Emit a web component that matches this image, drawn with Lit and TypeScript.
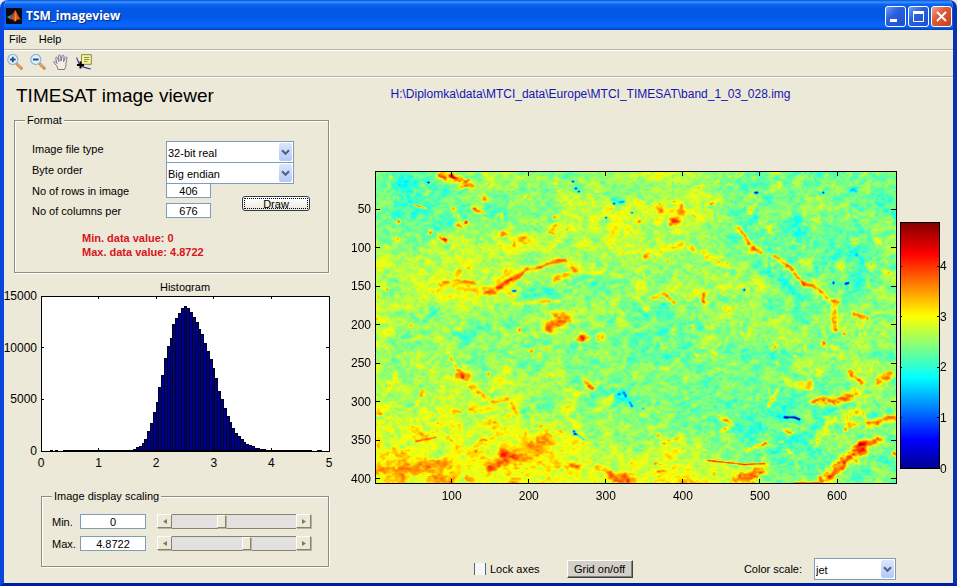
import { LitElement, html, svg, css } from "lit";
import { customElement, property, query } from "lit/decorators.js";

interface Tick {
  at: number;
  label: string;
}

/** A ridge (positive amp) or basin (negative amp) in the raster: amp, width, then x,y pairs. */
type Feature = [number, number, ...number[]];

const MAX_VALUE = 4.8722;
const RASTER_W = 520;
const RASTER_H = 312;

/* Regional mean values, one row for every 39 raster lines. */
const MEANS = [
  [2.3, 2.1, 2.5, 2.6, 2.35, 2.5, 2.65, 2.6, 2.5, 2.4, 2.3, 2.3, 2.35, 2.25],
  [2.3, 2.2, 2.25, 2.35, 2.4, 2.75, 2.75, 2.75, 2.75, 2.4, 2.25, 2.35, 2.4, 2.3],
  [2.65, 2.6, 2.6, 2.8, 2.7, 2.65, 2.8, 2.6, 2.5, 2.4, 2.25, 2.2, 2.3, 2.5],
  [2.6, 2.75, 2.9, 2.9, 2.6, 2.3, 2.5, 2.5, 2.65, 2.6, 2.4, 2.35, 2.3, 2.4],
  [2.7, 2.65, 2.35, 2.4, 2.5, 2.6, 2.4, 2.3, 2.4, 2.5, 2.55, 2.4, 2.5, 2.4],
  [2.6, 2.55, 2.6, 2.5, 2.45, 2.35, 2.35, 2.4, 2.4, 2.35, 2.3, 2.4, 2.55, 2.45],
  [2.75, 2.6, 2.9, 2.8, 2.55, 2.5, 2.3, 2.35, 2.4, 2.35, 2.25, 2.25, 2.4, 2.4],
  [2.95, 2.85, 2.8, 3.0, 3.0, 2.75, 2.65, 2.6, 2.5, 2.3, 2.2, 2.3, 2.4, 2.35],
  [3.1, 3.1, 2.95, 2.95, 3.0, 2.9, 2.95, 2.95, 3.0, 2.8, 2.35, 2.5, 2.4, 2.3],
];

const FEATURES: Feature[] = [
  [2.1, 4, 66, 4, 76, 5], [1.5, 3, 76, 5, 84, 9, 92, 9], [1.3, 2, 85, 15, 97, 14], [1.4, 4, 109, 28],
  [1.5, 1, 38, 33, 51, 37], [1.8, 2, 98, 37, 106, 41], [1.9, 2, 91, 50], [1.5, 3, 83, 53],
  [2.4, 2, 66, 67, 69, 68], [2, 2, 55, 60], [1.6, 2, 23, 50], [1.6, 2, 23, 67], [1.3, 3, 129, 62],
  [1, 4, 148, 68], [1, 5, 177, 57], [0.8, 4, 160, 51], [1, 2, 178, 45], [1.3, 2, 78, 37],
  [1.3, 2, 123, 115, 138, 107, 152, 98, 165, 96, 178, 90, 190, 88],
  [0.8, 2, 65, 112, 78, 109, 102, 111], [0.5, 3, 78, 116, 125, 116, 138, 110], [1.2, 3, 179, 108, 186, 104, 192, 103],
  [1.3, 3, 199, 97], [1.1, 3, 110, 121, 118, 120], [1, 3, 83, 100], [0.7, 4, 93, 97],
  [0.8, 2, 153, 130, 183, 129], [1.3, 4, 172, 156, 193, 148], [1.1, 4, 180, 143, 188, 144],
  [1.4, 2, 143, 157], [1, 2, 35, 153], [1, 3, 200, 168, 210, 165], [1.1, 2, 196, 138],
  [-0.35, 12, 32, 13], [-0.25, 10, 50, 48], [-0.6, 8, 57, 139], [-0.4, 12, 148, 117, 175, 117],
  [-1, 3, 237, 28, 248, 30], [-0.25, 14, 125, 35], [-0.25, 14, 225, 120],
  [-3, 1, 53, 11], [-3, 1, 200, 17], [-3, 1, 203, 20], [-3, 1, 238, 32], [-3, 1, 230, 46],
  [-3, 1, 256, 41], [-2.4, 1, 137, 119, 140, 119], [-3, 1, 197, 10],
  [-3, 1, 379, 21, 381, 21], [-3.5, 1, 457, 111], [-2.3, 1, 469, 112, 472, 111], [-3.5, 1, 368, 118],
  [-2.5, 1, 447, 21],
  [1.6, 3, 296, 51, 300, 49], [1, 5, 286, 39], [1.2, 3, 263, 50], [1, 3, 375, 39], [0.7, 5, 305, 39],
  [1.1, 2, 363, 57, 375, 74, 385, 80], [1.3, 2, 398, 84, 415, 97, 427, 113],
  [1.2, 2, 427, 113, 442, 116, 452, 127, 462, 130], [1.1, 3, 458, 132, 459, 157],
  [0.8, 5, 378, 77], [0.6, 7, 430, 91], [0.8, 4, 465, 94], [0.8, 5, 495, 93], [0.8, 5, 512, 102],
  [0.8, 4, 502, 69], [1.3, 2, 468, 162], [1.2, 2, 478, 142, 490, 147],
  [1.2, 2, 277, 126, 288, 122, 298, 131], [1.4, 2, 327, 123, 327, 131], [1, 3, 350, 136],
  [1.1, 3, 270, 138], [1, 3, 270, 84], [0.5, 4, 285, 79, 305, 72, 322, 79, 352, 95],
  [-0.5, 6, 378, 92, 405, 109, 420, 122, 420, 137], [-1.2, 2, 475, 18, 481, 18],
  [-0.3, 10, 478, 82], [-0.3, 6, 355, 16], [-0.3, 9, 420, 54], [-0.35, 12, 290, 137],
  [1.4, 4, 84, 203, 89, 205], [0.9, 2, 75, 186, 87, 204], [0.7, 3, 95, 214, 118, 229, 132, 227, 142, 241],
  [0.8, 4, 97, 239], [0.5, 5, 118, 251], [0.8, 12, 158, 274, 167, 268], [1.4, 5, 128, 282, 140, 284],
  [1.1, 4, 113, 296, 130, 290], [1, 1, 40, 269, 60, 265], [0.5, 6, 2, 297, 68, 292],
  [1, 3, 3, 242], [0.6, 6, 62, 307, 76, 304], [0.7, 4, 28, 304], [1.1, 3, 195, 293, 202, 294],
  [1.2, 5, 238, 306, 252, 307], [0.9, 3, 222, 296, 235, 301], [1, 2, 185, 258],
  [1.5, 2, 207, 208, 217, 216], [0.8, 4, 229, 227, 235, 227], [1.3, 2, 155, 178], [1.3, 2, 113, 202],
  [1, 3, 207, 166], [1, 3, 225, 165], [-0.7, 4, 148, 239], [-0.4, 5, 245, 222, 257, 232],
  [-1.9, 2, 199, 261], [-1.2, 1, 199, 261, 208, 267], [-3, 1, 198, 259],
  [-1.2, 1, 248, 220, 250, 224], [-1.2, 1, 254, 230, 256, 234], [-1.2, 1, 267, 236], [-1.2, 1, 243, 222],
  [-2.6, 1, 408, 245, 418, 245, 423, 247],
  [1.4, 2, 473, 200, 485, 211], [1.2, 4, 504, 207, 513, 203], [1.5, 4, 459, 229, 480, 221],
  [1.4, 3, 438, 229, 455, 228], [1, 2, 402, 217, 392, 234], [0.7, 6, 432, 214],
  [0.6, 4, 410, 209, 432, 214], [0.7, 4, 442, 200], [0.8, 4, 460, 176], [1.1, 2, 448, 172],
  [1.2, 2, 343, 244, 357, 252, 348, 259], [1.2, 4, 472, 253, 479, 251], [1.8, 2, 468, 258],
  [1.5, 4, 492, 251, 518, 245], [1.3, 2, 372, 277, 390, 272], [1.3, 2, 408, 258, 414, 261],
  [1.5, 1, 332, 288, 368, 292, 388, 291], [1.4, 5, 363, 307, 376, 303, 385, 297],
  [1.8, 6, 453, 304, 472, 286, 483, 278], [1.8, 4, 481, 278, 490, 270, 502, 268], [1.1, 3, 445, 307],
  [1.3, 1, 418, 310, 442, 310], [1.8, 2, 518, 281], [0.6, 4, 440, 270, 450, 252, 480, 240],
  [-0.3, 14, 432, 269], [-0.25, 12, 478, 299], [-0.3, 8, 360, 256], [-0.25, 12, 410, 235],
];

function hash(x: number, y: number, seed: number): number {
  let h = Math.imul(x, 374761393) ^ Math.imul(y, 668265263) ^ Math.imul(seed, 974634541);
  h = Math.imul(h ^ (h >>> 13), 1274126177);
  h = Math.imul(h ^ (h >>> 15), 2246822519);
  return ((h ^ (h >>> 16)) >>> 0) / 2147483648 - 1;
}

function noise(x: number, y: number, sx: number, sy: number, seed: number): number {
  const gx = x / sx;
  const gy = y / sy;
  const ix = Math.floor(gx);
  const iy = Math.floor(gy);
  const fx = gx - ix;
  const fy = gy - iy;
  const ux = fx * fx * (3 - 2 * fx);
  const uy = fy * fy * (3 - 2 * fy);
  const top = hash(ix, iy, seed) * (1 - ux) + hash(ix + 1, iy, seed) * ux;
  const bottom = hash(ix, iy + 1, seed) * (1 - ux) + hash(ix + 1, iy + 1, seed) * ux;
  return top * (1 - uy) + bottom * uy;
}

function regionalMean(x: number, y: number): number {
  const gx = Math.min(x / 40, 12.99);
  const gy = Math.min(y / 39, 7.99);
  const ix = Math.floor(gx);
  const iy = Math.floor(gy);
  const fx = gx - ix;
  const fy = gy - iy;
  const top = MEANS[iy][ix] * (1 - fx) + MEANS[iy][ix + 1] * fx;
  const bottom = MEANS[iy + 1][ix] * (1 - fx) + MEANS[iy + 1][ix + 1] * fx;
  return top * (1 - fy) + bottom * fy;
}

function segmentDistance(x: number, y: number, ax: number, ay: number, bx: number, by: number): number {
  const dx = bx - ax;
  const dy = by - ay;
  const len = dx * dx + dy * dy;
  const t = len ? Math.max(0, Math.min(1, ((x - ax) * dx + (y - ay) * dy) / len)) : 0;
  return Math.hypot(x - ax - t * dx, y - ay - t * dy);
}

function jet(t: number): [number, number, number] {
  const band = (c: number) => 255 * Math.max(0, Math.min(1, 1.5 - Math.abs(4 * t - c)));
  return [band(3), band(2), band(1)];
}

function buildRaster(): Float32Array {
  const data = new Float32Array(RASTER_W * RASTER_H);
  for (let y = 0; y < RASTER_H; y++) {
    for (let x = 0; x < RASTER_W; x++) {
      const wx = x + noise(x, y, 9, 9, 11) * 5;
      const wy = y + noise(x, y, 9, 9, 12) * 4;
      const speck = Math.max(0, noise(wx, wy, 5, 4, 9) - 0.66) * (0.8 + noise(x, y, 40, 30, 10));
      data[y * RASTER_W + x] =
        0.05 +
        regionalMean(Math.max(0, wx), Math.max(0, wy)) +
        noise(wx, wy, 22, 14, 1) * 0.16 +
        noise(wx, wy, 10, 7, 2) * 0.19 +
        noise(wx, wy, 5, 4, 3) * 0.22 +
        noise(x, y, 3, 2, 4) * 0.22 +
        speck * 1.8;
    }
  }
  for (const [amp, width, ...pts] of FEATURES) {
    const line = pts.length === 2 ? [...pts, ...pts] : pts;
    const reach = Math.ceil(width * 2.4);
    const xs = line.filter((_, i) => i % 2 === 0);
    const ys = line.filter((_, i) => i % 2 === 1);
    const x1 = Math.min(RASTER_W - 1, Math.max(...xs) + reach);
    const y1 = Math.min(RASTER_H - 1, Math.max(...ys) + reach);
    for (let y = Math.max(0, Math.min(...ys) - reach); y <= y1; y++) {
      for (let x = Math.max(0, Math.min(...xs) - reach); x <= x1; x++) {
        const warp = width > 1 ? Math.min(3, width * 0.6) : 0;
        const wx = x + noise(x, y, 5, 4, 6) * warp;
        const wy = y + noise(x, y, 5, 4, 7) * warp;
        let d = Infinity;
        for (let i = 0; i + 3 < line.length; i += 2) {
          d = Math.min(d, segmentDistance(wx, wy, line[i], line[i + 1], line[i + 2], line[i + 3]));
        }
        const grain = width > 1 ? 0.85 + noise(x, y, 3, 2, 8) * 0.4 : 1;
        data[y * RASTER_W + x] += amp * grain * Math.exp(-((d / width) ** 2));
      }
    }
  }
  return data.map((v) => (v > 3.45 ? 3.45 + (v - 3.45) * 0.6 : v));
}

const num = (n: number): Tick => ({ at: n, label: String(n) });

/** Tick marks and tick labels laid over a plot that fills the same grid cell. */
@customElement("plot-axes")
export class PlotAxes extends LitElement {
  @property({ attribute: false }) xTicks: Tick[] = [];
  @property({ attribute: false }) yTicks: Tick[] = [];
  @property({ attribute: false }) xRange: [number, number] = [0, 1];
  @property({ attribute: false }) yRange: [number, number] = [0, 1];
  @property({ type: Number }) tick = 3;
  @property({ type: Boolean, attribute: "labels-right" }) labelsRight = false;

  static styles = css`
    :host { display: grid; min-width: 0; }
    svg { width: 100%; height: 100%; overflow: visible; display: block; }
    line { stroke: #000; stroke-width: 1; shape-rendering: crispEdges; }
    rect { fill: none; stroke: #000; shape-rendering: crispEdges; }
    text { font: 12px "Liberation Sans", Arial, sans-serif; fill: #000; }
    .x { text-anchor: middle; }
    .left { text-anchor: end; }
  `;

  private share(v: number, [from, to]: [number, number]) {
    return `${((v - from) / (to - from)) * 100}%`;
  }

  render() {
    return html`<svg>
      <rect width="100%" height="100%"></rect>
      ${this.xTicks.map(({ at, label }) => {
        const x = this.share(at, this.xRange);
        return svg`
          <svg x=${x} y="100%"><line y2=${-this.tick}></line></svg>
          <line x1=${x} x2=${x} y1="0" y2=${this.tick}></line>
          <text class="x" x=${x} y="100%" dy="16">${label}</text>`;
      })}
      ${this.yTicks.map(({ at, label }) => {
        const y = this.share(at, this.yRange);
        return svg`
          <line x1="0" x2=${this.tick} y1=${y} y2=${y}></line>
          <svg x="100%" y=${y}><line x2=${-this.tick}></line></svg>
          <text class=${this.labelsRight ? "right" : "left"} x=${this.labelsRight ? "100%" : "0"}
            y=${y} dx=${this.labelsRight ? 1 : -4} dy="4">${label}</text>`;
      })}
    </svg>`;
  }
}

@customElement("raster-plot")
export class RasterPlot extends LitElement {
  @query("canvas") private canvas!: HTMLCanvasElement;

  static styles = css`
    :host { display: block; }
    canvas { display: block; width: 100%; height: auto; }
  `;

  firstUpdated() {
    const ctx = this.canvas.getContext("2d")!;
    const image = ctx.createImageData(RASTER_W, RASTER_H);
    buildRaster().forEach((v, i) => {
      const [r, g, b] = jet(Math.max(0, v) / MAX_VALUE);
      image.data.set([r, g, b, 255], i * 4);
    });
    ctx.putImageData(image, 0, 0);
  }

  render() {
    return html`<canvas width=${RASTER_W} height=${RASTER_H} role="img" aria-label="Image data"></canvas>`;
  }
}

const FIRST_BIN = 33;
const COUNTS = [
  190, 320, 450, 745, 1130, 1850, 2690, 3760, 4730, 6190, 7350, 8910, 10100, 10850, 12200, 12860,
  13280, 13770, 13960, 13770, 13450, 12960, 12400, 11790, 11240, 10370, 9650, 8900, 8030, 6970,
  5800, 5020, 4150, 3370, 2720, 2200, 1720, 1430, 1130, 870, 650, 550, 420, 290, 230, 170, 170, 90,
];

@customElement("histogram-plot")
export class HistogramPlot extends LitElement {
  static styles = css`
    :host { display: block; min-height: 0; background: #fff; }
    svg { display: block; width: 100%; height: 100%; }
    rect { fill: #00008f; }
    path { stroke: #000020; fill: none; vector-effect: non-scaling-stroke; shape-rendering: crispEdges; }
    .floor { stroke: #000; stroke-width: 2; }
  `;

  render() {
    const bin = MAX_VALUE / 100;
    return html`<svg viewBox="0 0 5 15000" preserveAspectRatio="none" role="img" aria-label="Histogram of data values">
      ${COUNTS.map((count, i) => {
        const x = (FIRST_BIN + i) * bin;
        return svg`
          <rect x=${x} y=${15000 - count} width=${bin} height=${count}></rect>
          <path d="M${x} 15000V${15000 - count}H${x + bin}V15000"></path>`;
      })}
      <path class="floor" d="M.15 15000H.2M.25 15000H.3M.38 15000H4.7M4.8 15000H4.87"></path>
    </svg>`;
  }
}

@customElement("scale-slider")
export class ScaleSlider extends LitElement {
  @property() name = "";
  @property({ type: Number }) value = 0;

  static styles = css`
    :host { display: flex; height: 15px; min-width: 0; }
    button, input::-webkit-slider-thumb {
      box-sizing: border-box;
      background: #ece9d8;
      border: 1px solid;
      border-color: #fff #85836f #85836f #fff;
      box-shadow: 1px 1px 0 #b5b2a0;
    }
    button { width: 15px; height: 14px; padding: 0; display: grid; place-items: center; flex: none; }
    button svg { width: 4px; height: 5px; fill: #7c7a6c; }
    input {
      appearance: none;
      flex: 1;
      min-width: 0;
      margin: 0;
      height: 15px;
      background: #e3e1e0;
      border: solid #85836f;
      border-width: 1px 0;
      box-sizing: border-box;
    }
    input::-webkit-slider-thumb { appearance: none; width: 9px; height: 13px; }
  `;

  render() {
    return html`
      <button aria-label="Decrease ${this.name}"><svg viewBox="0 0 4 5"><path d="M4 0v5L0 2.5z" /></svg></button>
      <input type="range" aria-label="${this.name} slider" min="0" max="100" .value=${String(this.value)} />
      <button aria-label="Increase ${this.name}"><svg viewBox="0 0 4 5"><path d="M0 0v5l4-2.5z" /></svg></button>
    `;
  }
}

const chevron = html`<span class="drop"><svg viewBox="0 0 9 7"><path d="M1 1.2l3.5 3.6L8 1.2" /></svg></span>`;

@customElement("app-root")
export class AppRoot extends LitElement {
  static styles = css`
    :host {
      display: block;
      font: 11px/14px "Liberation Sans", Arial, sans-serif;
      color: #000;
      background: #dfe6f5;
    }
    * { box-sizing: border-box; }
    button, input, select { font: inherit; color: inherit; margin: 0; }
    .window {
      min-height: 100vh;
      display: flex;
      flex-direction: column;
      background: #ece9d8;
      border: solid;
      border-width: 0 4px 3px;
      border-radius: 8px 8px 0 0;
      border-color: #0a3fd8 #0831b4 #001f9c #0a45dc;
      overflow: hidden;
    }
    .titlebar {
      display: flex;
      align-items: center;
      gap: 4px;
      height: 30px;
      flex: none;
      margin: 0 -4px;
      padding: 2px 5px 0 6px;
      background: linear-gradient(#0a50d8 0, #3c95ff 7%, #0b66f0 14%, #0456e4 30%, #0358ea 60%, #0866fb 82%, #0663f6 90%, #0340c0 100%);
      color: #fff;
    }
    .titlebar h1 {
      flex: 1;
      margin: 0;
      font: bold 12px/18px "Open Sans", "Noto Sans", sans-serif;
      text-shadow: 1px 1px 1px #0a2a80;
    }
    .logo { width: 16px; height: 16px; }
    .caption { display: flex; gap: 2px; }
    .caption button {
      width: 21px;
      height: 21px;
      padding: 0;
      border: 1px solid #fff;
      border-radius: 3px;
      background: linear-gradient(135deg, #6f9cf5, #2a5fe0 40%, #1c4fd0);
    }
    .caption button.close { background: linear-gradient(135deg, #f0a28c, #e05a38 40%, #c8401c); }
    .caption svg { display: block; width: 19px; height: 19px; fill: none; stroke: #fff; }
    .menubar, .toolbar { display: flex; align-items: center; flex: none; }
    .menubar { height: 20px; padding: 0 5px 2px; gap: 12px; border-bottom: 1px solid #b4b2a4; }
    .menubar button { border: 0; padding: 0; background: none; }
    .toolbar {
      height: 27px;
      gap: 7px;
      padding: 0 3px 4px;
      border-top: 1px solid #fff;
      border-bottom: 1px solid #b4b2a4;
      box-shadow: 0 1px 0 #fff;
    }
    .toolbar button { width: 16px; height: 16px; padding: 0; border: 0; background: none; }
    .toolbar svg { display: block; width: 16px; height: 16px; }
    .content { flex: 1; display: grid; grid-template-columns: 325px minmax(0, 1fr); padding-top: 8px; }
    .side { display: flex; flex-direction: column; }
    .side h2 { margin: 0 0 6px 12px; font: 19px/22px "Liberation Sans", Arial, sans-serif; }
    fieldset {
      min-width: 0;
      margin: 0;
      border: 1px solid #8f8d80;
      box-shadow: 1px 1px 0 #fff, inset 1px 1px 0 #fff;
    }
    legend { background: #ece9d8; padding: 0 2px; }
    .format { margin: 0 0 8px 10px; padding: 14px 17px 13px; }
    .format legend { margin-left: -7px; }
    .rows { display: grid; grid-template-columns: 134px 45px 31px 52px 1fr; grid-template-rows: 21px 21px 20px 14px; }
    .rows .wide { grid-column: 2 / 5; }
    .rows label { grid-column: 1; padding-top: 1px; }
    .combo { display: grid; }
    .combo > * { grid-area: 1 / 1; }
    select {
      appearance: none;
      width: 100%;
      height: 22px;
      padding: 2px 20px 0 1px;
      border: 1px solid #7f9db9;
      border-radius: 0;
      background: #fff;
    }
    .drop {
      justify-self: end;
      display: grid;
      place-items: center;
      width: 13px;
      height: 18px;
      margin: 2px;
      background: linear-gradient(#dbe6fd, #b4c9f6);
      border-radius: 2px;
      pointer-events: none;
    }
    .drop svg { width: 9px; height: 7px; fill: none; stroke: #4d6185; stroke-width: 2; }
    input.value {
      width: 100%;
      height: 15px;
      padding: 0;
      border: 1px solid #7f9db9;
      background: #fff;
      text-align: center;
    }
    .draw {
      grid-column: 4 / 6;
      grid-row: 3 / 5;
      align-self: center;
      justify-self: start;
      width: 68px;
      height: 15px;
      padding: 0;
      margin-top: 6px;
      overflow: hidden;
      line-height: 15px;
      border: 1px solid #303c50;
      border-radius: 3px;
      background: linear-gradient(#fff, #ece9dc);
      outline: 1px dotted #000;
      outline-offset: -3px;
    }
    .range { margin: 14px 0 0 50px; color: #d8141c; font-weight: bold; }
    .range p { margin: 0; }
    .histogram { margin: 0 0 22px 37px; }
    .histogram h3 { margin: 0 0 4px; height: 11px; overflow: hidden; font-size: 11px; line-height: 12px; font-weight: normal; text-align: center; }
    .stack { display: grid; }
    .stack > * { grid-area: 1 / 1; }
    .histogram .stack { grid-template-rows: 155px; margin-bottom: 16px; }
    .scaling { margin: 0 0 16px 37px; padding: 11px 17px 15px 10px; }
    .scaling .line { display: grid; grid-template-columns: 28px 66px minmax(0, 1fr); align-items: center; height: 15px; }
    .scaling .line + .line { margin-top: 7px; }
    .scaling scale-slider { margin-left: 11px; }
    .view { display: flex; flex-direction: column; }
    .path { margin: 2px 0 70px; padding-right: 101px; text-align: center; font-size: 12px; color: #1414b4; white-space: nowrap; }
    .figure { display: grid; grid-template-columns: 46px minmax(0, 1fr) 4px 39px 14px; }
    .figure .image { grid-column: 2; }
    .colorbar { grid-column: 4; margin: 51px 0 15px; }
    .jet {
      background: linear-gradient(to top, #00008f, #00f 12%, #0ff 37%, #ff0 62%, #f00 87%, #800000);
    }
    .options {
      margin-top: auto;
      padding: 0 57px 3px 0;
      display: flex;
      align-items: center;
    }
    .lock { display: flex; align-items: center; gap: 4px; margin-left: 145px; }
    .lock input {
      appearance: none;
      width: 12px;
      height: 12px;
      background: #f7f7f5;
      border: solid #4d6a8c;
      border-width: 0 1px;
    }
    .grid {
      width: 66px;
      height: 18px;
      margin-left: 27px;
      padding: 0;
      background: #d4d0c8;
      border: 1px solid;
      border-color: #fff #404040 #404040 #fff;
      box-shadow: inset -1px -1px 0 #808080;
    }
    .scale { display: flex; align-items: center; gap: 12px; margin-left: auto; }
    .scale .combo { width: 82px; }
  `;

  render() {
    return html`
      <div class="window">
        <header class="titlebar">
          <svg class="logo" viewBox="0 0 16 16">
            <rect width="16" height="16" fill="#0b0b12" />
            <path d="M1 9l4-2 2 1.500-2 3z" fill="#3f8fb0" />
            <path d="M5 7l3-3 1-2L7 8.500 5 11.500 4 11z" fill="#7a4a48" />
            <path d="M9 2c1 0 2.500 5 6 10-2-1-3-1-4 0l-2.500 2C8 12 7 11 5 11.500 7 9 8 5 9 2z" fill="#d9541e" />
            <path d="M9.500 3c.5 2 1 5 .5 9l-1 1.500c.5-3 .5-7 .5-10.500z" fill="#f6b26a" />
          </svg>
          <h1>TSM_imageview</h1>
          <div class="caption">
            <button aria-label="Minimize"><svg viewBox="0 0 19 19"><path d="M4 13.500h7" stroke-width="3" /></svg></button>
            <button aria-label="Maximize"><svg viewBox="0 0 19 19"><path d="M4.500 5v9.500h10V5" /><path d="M4 5.500h11" stroke-width="3" /></svg></button>
            <button class="close" aria-label="Close"><svg viewBox="0 0 19 19"><path d="M5 5l9 9M14 5l-9 9" stroke-width="2" /></svg></button>
          </div>
        </header>
        <nav class="menubar"><button>File</button><button>Help</button></nav>
        <div class="toolbar">
          <button aria-label="Zoom in">
            <svg viewBox="0 0 16 16">
              <path d="M10 10l4.300 4.300" stroke="#c98a4b" stroke-width="3" stroke-linecap="round" />
              <path d="M10 9.500l4 4" stroke="#f3c894" />
              <circle cx="5.800" cy="5.500" r="5" fill="#e4f1fb" stroke="#8fb4d6" stroke-width="1.200" />
              <path d="M3 5.500h5.600M5.800 2.700v5.600" stroke="#1b4f8f" stroke-width="1.800" />
            </svg>
          </button>
          <button aria-label="Zoom out">
            <svg viewBox="0 0 16 16">
              <path d="M10 10l4.300 4.300" stroke="#c98a4b" stroke-width="3" stroke-linecap="round" />
              <path d="M10 9.500l4 4" stroke="#f3c894" />
              <circle cx="5.800" cy="5.500" r="5" fill="#e4f1fb" stroke="#8fb4d6" stroke-width="1.200" />
              <path d="M3 5.500h5.600" stroke="#1b4f8f" stroke-width="1.800" />
            </svg>
          </button>
          <button aria-label="Pan">
            <svg viewBox="0 0 16 16">
              <path d="M5 15.500L4 12 .7 8.600C.2 7.500 1.800 7 2.600 8L4 9.500 2.700 4.500C2.500 3 4 2.600 4.500 4L6 7.500 5.600 2C5.600.6 7.300.6 7.600 2l.5 5 1-5C9.400.8 11 1 11 2.300L10.600 7.500l1.700-3.800c.7-1.200 2-.6 1.700.6L13 9c0 2 0 4-1.500 6.500z" fill="#fbeadb" stroke="#6a6c9c" stroke-width=".9" />
            </svg>
          </button>
          <button aria-label="Data cursor">
            <svg viewBox="0 0 16 16">
              <path d="M.5 3.500C2 6 2 9 4 11s6 3 11 4" fill="none" stroke="#3c3ca0" stroke-width="1.200" />
              <path d="M5.500 .7h9.800v9.600H5.500z" fill="#f6f2a0" stroke="#8c8a3c" />
              <path d="M8 3.500h5M8 5.500h5M8 7.500h3.500" stroke="#8c8a50" />
              <path d="M4.500 7.500v7M1 11h7" stroke="#000" stroke-width="2" />
            </svg>
          </button>
        </div>
        <main class="content">
          <section class="side">
            <h2>TIMESAT image viewer</h2>
            <fieldset class="format">
              <legend>Format</legend>
              <div class="rows">
                <label for="type">Image file type</label>
                <span class="combo wide"><select id="type"><option>32-bit real</option></select>${chevron}</span>
                <label for="order">Byte order</label>
                <span class="combo wide"><select id="order"><option>Big endian</option></select>${chevron}</span>
                <label for="rows">No of rows in image</label>
                <input class="value" id="rows" value="406" />
                <label for="cols">No of columns per</label>
                <input class="value" id="cols" value="676" />
                <button class="draw">Draw</button>
              </div>
              <div class="range">
                <p>Min. data value: 0</p>
                <p>Max. data value: 4.8722</p>
              </div>
            </fieldset>
            <div class="histogram">
              <h3>Histogram</h3>
              <div class="stack">
                <histogram-plot></histogram-plot>
                <plot-axes
                  .xTicks=${[0, 1, 2, 3, 4, 5].map(num)} .xRange=${[0, 5]}
                  .yTicks=${[0, 5000, 10000, 15000].map(num)} .yRange=${[15000, 0]}
                ></plot-axes>
              </div>
            </div>
            <fieldset class="scaling">
              <legend>Image display scaling</legend>
              <div class="line">
                <label for="min">Min.</label><input class="value" id="min" value="0" />
                <scale-slider name="Min." .value=${39}></scale-slider>
              </div>
              <div class="line">
                <label for="max">Max.</label><input class="value" id="max" value="4.8722" />
                <scale-slider name="Max." .value=${61}></scale-slider>
              </div>
            </fieldset>
          </section>
          <section class="view">
            <p class="path">H:\\Diplomka\\data\\MTCI_data\\Europe\\MTCI_TIMESAT\\band_1_03_028.img</p>
            <div class="figure">
              <div class="stack image">
                <raster-plot></raster-plot>
                <plot-axes tick="5"
                  .xTicks=${[100, 200, 300, 400, 500, 600].map(num)} .xRange=${[0.5, 676.5]}
                  .yTicks=${[50, 100, 150, 200, 250, 300, 350, 400].map(num)} .yRange=${[0.5, 406.5]}
                ></plot-axes>
              </div>
              <div class="stack colorbar">
                <div class="jet"></div>
                <plot-axes labels-right tick="2"
                  .yTicks=${[0, 1, 2, 3, 4].map(num)} .yRange=${[MAX_VALUE, 0]}
                ></plot-axes>
              </div>
            </div>
            <div class="options">
              <label class="lock"><input type="checkbox" />Lock axes</label>
              <button class="grid">Grid on/off</button>
              <div class="scale">
                <label for="scale">Color scale:</label>
                <span class="combo"><select id="scale"><option>jet</option></select>${chevron}</span>
              </div>
            </div>
          </section>
        </main>
      </div>
    `;
  }
}
